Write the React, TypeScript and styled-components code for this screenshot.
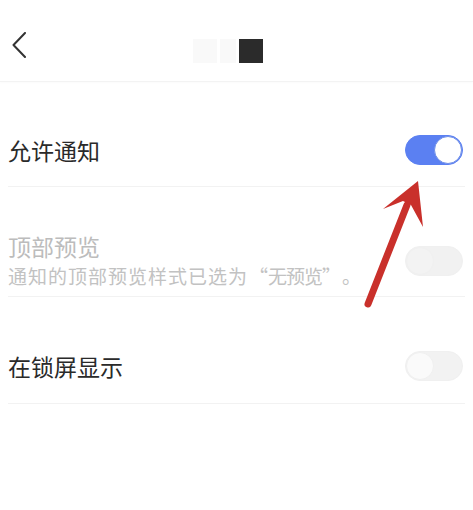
import React from "react";
import styled, { createGlobalStyle } from "styled-components";

const GlobalStyle = createGlobalStyle`
  html, body {
    margin: 0;
    padding: 0;
    background: #fff;
  }
  body {
    font-family: "Noto Sans CJK SC", "Noto Sans", sans-serif;
  }
`;

const Page = styled.div`
  position: relative;
  width: 473px;
  height: 510px;
  overflow: hidden;
  background: #fff;
`;

const Header = styled.header`
  height: 81px;
  display: flex;
  align-items: center;
  position: relative;
  border-bottom: 1px solid #f3f3f3;
  box-shadow: 0 1px 2px rgba(0, 0, 0, 0.02);
`;

const BackButton = styled.button`
  border: 0;
  background: none;
  padding: 0;
  margin-left: 9px;
  margin-top: 9px;
  width: 20px;
  height: 28px;
  display: flex;
  align-items: center;
  justify-content: center;
`;

const TitleArea = styled.div`
  position: absolute;
  left: 193px;
  top: 39px;
  display: flex;
  align-items: center;
  gap: 3px;
`;

const Redaction = styled.div<{ $w: number; $dark?: boolean }>`
  width: ${({ $w }) => $w}px;
  height: 24px;
  background: ${({ $dark }) => ($dark ? "#2b2b2b" : "#f9f9f9")};
`;

const List = styled.div`
  padding: 0 8px;
`;

const Row = styled.div<{ $top: number; $bottom: number }>`
  display: flex;
  align-items: center;
  justify-content: space-between;
  padding: ${({ $top, $bottom }) => `${$top}px 2px ${$bottom}px 0`};
  border-bottom: 1px solid #f2f2f2;
`;

const Texts = styled.div`
  display: flex;
  flex-direction: column;
  gap: 5px;
`;

const Title = styled.div<{ $disabled?: boolean }>`
  font-size: 23px;
  line-height: 26px;
  color: ${({ $disabled }) => ($disabled ? "#bcbcbc" : "#2a2a2a")};
`;

const Subtitle = styled.div`
  display: flex;
  align-items: baseline;
  height: 24px;
  font-size: 19px;
  line-height: 24px;
  color: #c2c2c2;
  white-space: nowrap;
`;

const Run = styled.span<{ $spacing: number }>`
  letter-spacing: ${({ $spacing }) => $spacing}px;
`;

/* full-width CJK quote cell */
const Quote = styled.span<{ $open?: boolean }>`
  width: 20px;
  text-align: ${({ $open }) => ($open ? "right" : "left")};
`;

const Toggle = styled.div<{ $on?: boolean; $dim?: boolean }>`
  position: relative;
  width: 58px;
  height: 30px;
  border-radius: 15px;
  box-sizing: border-box;
  flex-shrink: 0;
  background: ${({ $on, $dim }) => ($on ? "#5b80f2" : $dim ? "#f1f1f1" : "#f2f2f2")};
  border: 1px solid ${({ $on }) => ($on ? "#5b80f2" : "#f0f0f0")};

  &::after {
    content: "";
    position: absolute;
    top: 0;
    ${({ $on }) => ($on ? "right: 0;" : "left: 0;")}
    width: 28px;
    height: 28px;
    border-radius: 50%;
    box-sizing: border-box;
    background: ${({ $on, $dim }) => ($on ? "#fff" : $dim ? "#f3f3f3" : "#fafafa")};
    border: 1px solid ${({ $on }) => ($on ? "#6f8fe8" : "#f0f0f0")};
  }
`;

const Overlay = styled.svg`
  position: absolute;
  left: 0;
  top: 0;
  pointer-events: none;
`;

export default function App() {
  return (
    <Page>
      <GlobalStyle />
      <Header>
        <BackButton aria-label="back">
          <svg width="16" height="26" viewBox="0 0 16 26">
            <path d="M14 1 L2.5 13 L14 25" fill="none" stroke="#333" strokeWidth="2" strokeLinecap="round" strokeLinejoin="round" />
          </svg>
        </BackButton>
        <TitleArea>
          <Redaction $w={24} />
          <Redaction $w={16} />
          <Redaction $w={24} $dark />
        </TitleArea>
      </Header>
      <List>
        <Row $top={53} $bottom={21}>
          <Texts>
            <Title>允许通知</Title>
          </Texts>
          <Toggle $on />
        </Row>
        <Row $top={46} $bottom={8}>
          <Texts>
            <Title $disabled>顶部预览</Title>
            <Subtitle>
              <Run $spacing={1}>通知的顶部预览样式已选为</Run>
              <Quote $open>“</Quote>
              <Run $spacing={-1}>无预览</Run>
              <Quote>”</Quote>
              <Run $spacing={0}>。</Run>
            </Subtitle>
          </Texts>
          <Toggle $dim />
        </Row>
        <Row $top={54} $bottom={22}>
          <Texts>
            <Title>在锁屏显示</Title>
          </Texts>
          <Toggle />
        </Row>
      </List>
      <Overlay width="473" height="510" viewBox="0 0 473 510">
        <line x1="368" y1="304" x2="407" y2="205" stroke="#c9302b" strokeWidth="7" strokeLinecap="round" />
        <polygon points="418,181 423,227 411,205 403,201 383,209" fill="#c9302b" />
      </Overlay>
    </Page>
  );
}
